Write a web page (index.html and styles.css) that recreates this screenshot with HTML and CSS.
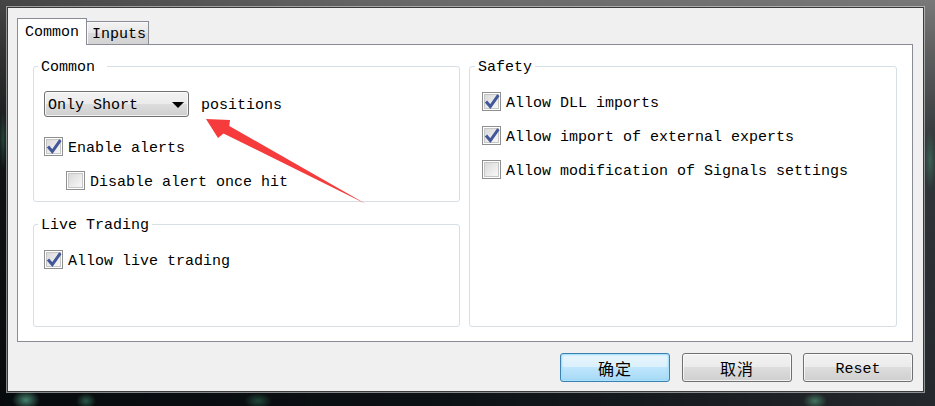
FILE: index.html
```html
<!DOCTYPE html>
<html>
<head>
<meta charset="utf-8">
<link rel="stylesheet" href="styles.css">
</head>
<body>
<div class="dialog">
  <div class="tabs">
    <div class="tab active">Common</div>
    <div class="tab inactive">Inputs</div>
  </div>
  <div class="panel">
    <div class="col">
      <div class="group g-common">
        <div class="gtitle">Common&nbsp;</div>
        <div class="gbody common-body">
          <div class="combo-row">
            <div class="combo"><span class="combo-text">Only Short</span><svg class="tri" width="12" height="6" viewBox="0 0 12 6"><polygon points="0,0 12,0 6,6" fill="#000"/></svg></div>
            <span class="after">positions</span>
          </div>
          <div class="cb r-enable"><span class="box"><svg class="chk" width="19" height="19" viewBox="0 0 19 19"><path d="M4 9.6 L8.3 14.6 L16.4 3.2" fill="none" stroke="#41579a" stroke-width="3"/></svg></span><span class="lbl">Enable alerts</span></div>
          <div class="cb r-disable"><span class="box"></span><span class="lbl">Disable alert once hit</span></div>
        </div>
      </div>
      <div class="group g-live">
        <div class="gtitle">Live Trading</div>
        <div class="gbody live-body">
          <div class="cb"><span class="box"><svg class="chk" width="19" height="19" viewBox="0 0 19 19"><path d="M4 9.6 L8.3 14.6 L16.4 3.2" fill="none" stroke="#41579a" stroke-width="3"/></svg></span><span class="lbl">Allow live trading</span></div>
        </div>
      </div>
    </div>
    <div class="group g-safety">
      <div class="gtitle">Safety</div>
      <div class="gbody safety-body">
        <div class="cb"><span class="box"><svg class="chk" width="19" height="19" viewBox="0 0 19 19"><path d="M4 9.6 L8.3 14.6 L16.4 3.2" fill="none" stroke="#41579a" stroke-width="3"/></svg></span><span class="lbl">Allow DLL imports</span></div>
        <div class="cb"><span class="box"><svg class="chk" width="19" height="19" viewBox="0 0 19 19"><path d="M4 9.6 L8.3 14.6 L16.4 3.2" fill="none" stroke="#41579a" stroke-width="3"/></svg></span><span class="lbl">Allow import of external experts</span></div>
        <div class="cb"><span class="box"></span><span class="lbl">Allow modification of Signals settings</span></div>
      </div>
    </div>
  </div>
  <div class="buttons">
    <button class="btn default cjk">确定</button>
    <button class="btn cjk">取消</button>
    <button class="btn latin">Reset</button>
  </div>
</div>
<svg class="arrow" width="935" height="406" viewBox="0 0 935 406">
  <polygon points="206,119 230,120 229.3,126 366,204 223.5,133.5 218,138" fill="#f53b3b"/>
</svg>
</body>
</html>
```
FILE: styles.css
```css
html, body {
  margin: 0;
  padding: 0;
}
body {
  width: 935px;
  height: 406px;
  overflow: hidden;
  position: relative;
  box-sizing: border-box;
  padding: 7px 0 0 7px;
  font-family: "Liberation Mono", "Noto Sans CJK SC", monospace;
  font-size: 15px;
  color: #000;
  background:
    radial-gradient(ellipse 14px 10px at 26px 400px, rgba(90,170,140,0.75), transparent),
    radial-gradient(ellipse 10px 8px at 86px 401px, rgba(70,150,120,0.55), transparent),
    radial-gradient(ellipse 14px 8px at 258px 401px, rgba(50,120,90,0.55), transparent),
    radial-gradient(ellipse 12px 8px at 815px 401px, rgba(90,170,130,0.6), transparent),
    radial-gradient(ellipse 10px 8px at 1000px 401px, rgba(90,170,130,0.6), transparent),
    radial-gradient(ellipse 6px 30px at 930px 160px, rgba(70,140,110,0.5), transparent),
    radial-gradient(ellipse 4px 30px at 3px 140px, rgba(60,130,100,0.4), transparent),
    linear-gradient(90deg, rgba(0,0,0,0.35), rgba(0,0,0,0) 45%, rgba(255,255,255,0.1)),
    linear-gradient(#6a6a6a 0, #4e4e4e 50px, #1a1f23 150px, #0b1014 100%);
}

.dialog {
  width: 917px;
  height: 385px;
  box-sizing: border-box;
  border: 1px solid #3a3a3a;
  box-shadow: 0 0 0 1px rgba(215,215,215,0.6);
  background: #f0f0f0;
  padding: 10px 10px 0 9px;
}

/* tabs */
.tabs {
  display: flex;
  align-items: flex-end;
  height: 26px;
}
.tab {
  box-sizing: border-box;
  border: 1px solid #898c95;
  border-bottom: none;
  white-space: nowrap;
}
.tab.active {
  width: 70px;
  height: 27px;
  margin-bottom: -1px;
  padding: 2px 0 0 7px;
  line-height: 24px;
  background: #fff;
  position: relative;
  z-index: 1;
}
.tab.inactive {
  width: 63px;
  height: 23px;
  margin-left: -1px;
  padding: 3px 0 0 5px;
  line-height: 20px;
  background: linear-gradient(#f3f3f3, #e8e8e8 48%, #dadada 52%, #d3d3d3);
  box-shadow: inset 1px 1px 0 #fafafa;
}

/* panel */
.panel {
  box-sizing: border-box;
  width: 896px;
  height: 298px;
  border: 1px solid #898c95;
  background: #fff;
  padding: 21px 15px 0 15px;
  display: flex;
  gap: 9px;
}
.col {
  width: 427px;
  display: flex;
  flex-direction: column;
}
.group {
  box-sizing: border-box;
  border: 1px solid #d5dfe5;
  border-radius: 3px;
}
.gtitle {
  box-sizing: border-box;
  width: fit-content;
  height: 18px;
  line-height: 14px;
  margin: -10px 0 0 4px;
  padding: 4px 3px 0 3px;
  background: #fff;
  white-space: nowrap;
}
.g-common {
  height: 136px;
}
.g-live {
  height: 103px;
  margin-top: 22px;
}
.g-safety {
  width: 428px;
  height: 261px;
}
.g-safety .gtitle {
  margin-left: 5px;
}
.gbody {
  display: flex;
  flex-direction: column;
}
.common-body {
  padding: 16px 0 0 10px;
}
.live-body {
  padding: 17px 0 0 10px;
}
.safety-body {
  padding: 17px 0 0 12px;
  gap: 15px;
}

/* combo */
.combo-row {
  display: flex;
  align-items: flex-start;
  height: 26px;
}
.combo {
  box-sizing: border-box;
  width: 145px;
  height: 26px;
  border: 1px solid #707070;
  border-radius: 3px;
  background: linear-gradient(#f2f2f2 0, #ebebeb 50%, #dddddd 50%, #cfcfcf 100%);
  box-shadow: inset 0 0 0 1px rgba(255,255,255,0.75);
  display: flex;
  align-items: flex-start;
  justify-content: space-between;
  padding: 0 4px 0 3px;
  white-space: nowrap;
}
.combo-text {
  line-height: 24px;
  margin-top: 2px;
}
.tri {
  display: block;
  margin-top: 10px;
}
.after {
  margin-left: 12px;
  line-height: 26px;
  margin-top: 2px;
}

/* checkboxes */
.cb {
  display: flex;
  align-items: flex-start;
  height: 19px;
  white-space: nowrap;
}
.r-enable {
  margin-top: 20px;
}
.r-disable {
  margin-top: 15px;
  margin-left: 22px;
}
.box {
  position: relative;
  box-sizing: border-box;
  width: 19px;
  height: 19px;
  flex: none;
  border: 1px solid #8e8f8f;
  background: #fff;
  margin-right: 5px;
}
.box::before {
  content: "";
  position: absolute;
  left: 1px;
  top: 1px;
  right: 1px;
  bottom: 1px;
  border: 1px solid #c6c6c6;
  background: linear-gradient(135deg, #d9d9d9, #ececec 60%, #f7f7f7);
}
.chk {
  position: absolute;
  left: -1px;
  top: -1px;
}
.lbl {
  line-height: 19px;
  margin-top: 2px;
}

/* buttons */
.buttons {
  display: flex;
  justify-content: flex-end;
  gap: 11px;
  margin-top: 11px;
}
.btn {
  box-sizing: border-box;
  width: 110px;
  height: 29px;
  margin: 0;
  padding: 0;
  border: 1px solid #707070;
  border-radius: 3px;
  background: linear-gradient(#f2f2f2 0, #ebebeb 50%, #dddddd 50%, #cfcfcf 100%);
  box-shadow: inset 0 0 0 1px rgba(255,255,255,0.7);
  font-family: "Liberation Mono", "Noto Sans CJK SC", monospace;
  font-size: 15px;
  color: #000;
}
.btn.latin {
  padding-top: 3px;
}
.btn.cjk {
  font-family: "Noto Sans CJK SC", sans-serif;
  font-size: 16px;
  letter-spacing: 1px;
}
.btn.default {
  margin-right: 1px;
  border-color: #3c7fb1;
  background: linear-gradient(#eaf6fd 0, #d9f0fc 50%, #bee6fd 50%, #a7d9f5 100%);
  box-shadow: inset 0 0 0 1px #a8e2fb, inset 0 0 2px 1px rgba(120,210,250,0.6);
}

/* annotation overlay */
.arrow {
  position: absolute;
  left: 0;
  top: 0;
  pointer-events: none;
}
```
